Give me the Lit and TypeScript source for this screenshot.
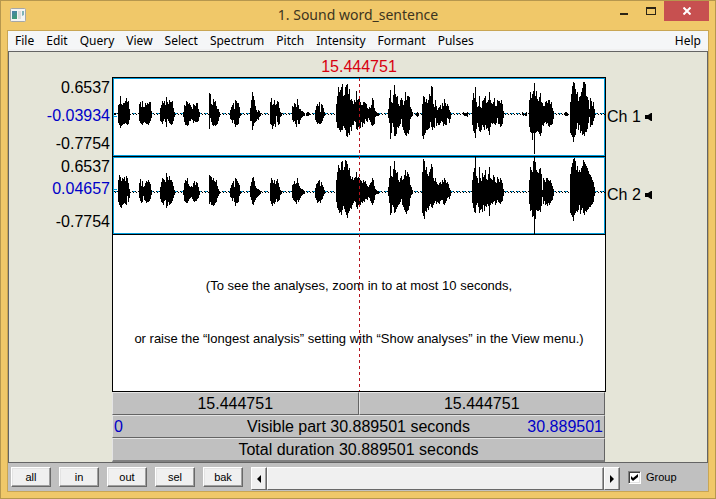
import { LitElement, html, css, svg } from "lit";
import { customElement, property } from "lit/decorators.js";

interface Burst {
  x: number;
  up: string;
  down: string;
}

/* Per-pixel amplitude above and below the zero line; x counts from the left plot edge. */
const channel1: Burst[] = [
  { x: 1, up: "1 1", down: "0 0" },
  { x: 5, up: "9 10 18 10 9 11 11 13 16 12 13 5", down: "8 10 13 11 10 9 9 8 9 10 9 5" },
  { x: 26, up: "10 12 7 13 7 7 11 9 11 10 12 12 3", down: "6 8 9 10 8 7 8 9 9 10 8 6 3" },
  { x: 47, up: "6 9 13 11 13 9 17 12 10 14 12 12 13 6 2", down: "6 7 9 6 4 7 12 4 6 8 9 10 9 6 2" },
  { x: 70, up: "2 9 8 13 12 10 11 9 7 5 10 9 8 11 11 5 2", down: "2 7 10 10 11 10 6 6 4 5 8 6 7 7 7 6 2" },
  { x: 96, up: "21 20 10 9 15 12 13 8 5 5 2", down: "14 3 7 10 11 10 11 10 9 6 2" },
  { x: 117, up: "4 7 9 11 5 14 13 11 11 7 1", down: "4 5 8 5 9 12 10 10 9 3 1" },
  { x: 137, up: "6 14 22 18 14 8 4 2 4 3 1", down: "6 6 15 11 8 7 6 4 5 2 1" },
  { x: 157, up: "12 16 9 10 14 9 10 13 12 6 2 1", down: "9 10 14 11 9 12 1 7 10 9 2 1" },
  { x: 179, up: "8 7 11 10 7 15 9 5 5 3 3 2 1", down: "5 7 6 9 12 5 9 9 5 3 2 1 1" },
  { x: 193, up: "1 2 2 1", down: "1 1 1 0" },
  { x: 202, up: "4 8 10 8 12 2 10 9 6 2", down: "5 7 9 8 9 9 8 6 3 1" },
  {
    x: 223,
    up: "10 18 27 22 24 27 30 18 19 27 29 30 20 25 14 15 13 10 14 12 23 14 15 18 12 9 9 12 12 11 10 6 5 7 6 9 16 14 6 3 2 1 1",
    down: "7 13 13 15 17 15 15 11 13 15 21 22 18 20 12 16 10 10 6 7 14 15 12 14 13 7 12 8 9 4 6 7 3 5 7 10 11 10 9 2 1 1 1",
  },
  {
    x: 275,
    up: "5 16 24 12 11 19 29 20 17 18 10 8 14 16 14 9 13 22 14 18 18 17 7 5 2",
    down: "3 8 24 18 8 12 21 21 19 12 13 11 9 4 12 15 18 20 21 18 19 15 4 2 1",
  },
  { x: 303, up: "1 2 1", down: "1 2 1" },
  {
    x: 309,
    up: "10 18 17 12 15 11 14 20 18 28 27 10 7 14 8 4 6 7 9 5 11 8 15 11 8 10 8 4 2",
    down: "21 24 20 18 15 15 14 13 7 12 15 12 13 3 11 8 10 10 8 6 7 11 9 10 10 3 4 8 4",
  },
  { x: 350, up: "2 1 1 1 2", down: "0 1 1 1 2" },
  {
    x: 359,
    up: "14 21 16 27 12 7 8 18 7 6 13 14 16 18 11 12 14 22 14 11 10 12 16 8 8 14 13 13 11 14 10 3",
    down: "10 16 18 23 14 8 12 16 17 15 10 12 15 10 14 13 16 20 12 8 9 8 9 10 8 3 9 9 12 11 9 3",
  },
  { x: 409, up: "2 1 0 1 2", down: "0 1 0 1 1" },
  {
    x: 416,
    up: "14 22 16 20 23 31 18 23 15 13 17 21 12 11 8 8 12 13 11 14 14 10 12 6 3",
    down: "12 17 18 25 18 39 18 17 16 17 19 21 18 10 11 8 7 9 8 11 12 10 10 9 4",
  },
  { x: 451, up: "1 2 2 1", down: "0 1 1 1" },
  {
    x: 457,
    up: "12 20 28 32 31 25 20 22 13 17 18 22 26 32 32 30 18 17 14 5 16 13 8 12 5",
    down: "18 20 22 27 22 20 14 8 15 10 18 16 20 19 21 17 17 14 8 2 12 10 10 6 3",
  },
];

const channel2: Burst[] = [
  { x: 5, up: "12 17 15 11 14 13 15 11 16 14 9 3", down: "9 12 14 15 12 11 10 11 12 3 9 5" },
  { x: 26, up: "9 13 6 11 5 6 9 11 10 12 10 8 2", down: "5 8 10 9 3 7 8 10 9 9 8 6 2" },
  { x: 47, up: "5 10 14 13 12 10 19 15 12 16 12 12 10 6 2", down: "6 9 10 12 8 7 15 13 9 12 11 10 8 5 2" },
  { x: 70, up: "2 9 12 11 14 8 6 5 6 5 9 11 7 10 9 5 1", down: "2 8 9 10 10 8 6 5 4 6 8 9 8 8 6 5 2" },
  { x: 96, up: "17 16 15 12 14 11 10 12 6 3 1", down: "11 9 12 12 13 12 10 9 5 3 1" },
  { x: 117, up: "4 7 9 11 5 14 13 11 9 7 1", down: "4 5 8 5 9 13 10 10 9 3 1" },
  { x: 137, up: "6 10 14 15 11 6 4 3 3 2 1", down: "4 7 11 12 9 7 5 4 3 2 1" },
  { x: 157, up: "9 14 12 9 12 8 11 13 9 5 2 1", down: "8 11 13 10 11 9 6 9 8 7 2 1" },
  { x: 179, up: "7 8 11 8 9 14 9 6 4 3 3 2 1", down: "5 7 8 9 11 7 9 7 5 3 2 1 1" },
  { x: 202, up: "4 8 9 11 12 6 10 7 5 2", down: "5 7 10 9 8 10 7 6 3 1" },
  {
    x: 223,
    up: "12 20 27 24 22 30 31 22 25 32 31 28 22 24 16 13 15 12 14 15 20 14 15 14 12 11 9 12 10 11 8 6 5 7 9 10 14 12 6 3 2 1 1",
    down: "9 15 17 20 19 22 17 13 16 19 22 25 20 18 15 16 12 10 8 9 14 16 12 13 12 9 10 8 9 6 6 7 4 5 8 10 12 10 7 2 1 1 1",
  },
  {
    x: 275,
    up: "5 14 26 16 15 23 31 22 19 20 12 10 14 16 12 13 17 22 16 20 18 15 7 5 2",
    down: "3 10 22 20 12 14 20 19 16 14 12 11 9 6 12 14 17 19 21 18 17 13 5 2 1",
  },
  {
    x: 309,
    up: "20 33 31 22 25 18 16 20 23 28 25 14 11 14 10 8 7 9 10 8 12 10 14 12 9 10 8 4 2",
    down: "20 23 26 18 19 15 17 13 11 14 15 12 10 8 11 9 10 11 8 7 7 11 12 10 8 5 4 6 3",
  },
  {
    x: 359,
    up: "12 20 24 35 16 14 9 25 14 11 19 15 17 22 13 12 18 25 14 13 12 17 15 10 9 15 13 10 14 12 9 3",
    down: "10 15 19 20 12 10 14 20 17 16 19 12 18 13 14 11 13 23 12 10 11 9 8 12 10 7 9 10 11 9 8 3",
  },
  {
    x: 416,
    up: "12 25 22 20 31 35 30 22 20 19 23 24 18 2 14 12 10 14 14 12 11 12 9 6 3",
    down: "11 18 17 24 23 41 26 17 18 18 17 19 13 4 11 8 12 11 13 10 12 10 8 7 3",
  },
  {
    x: 457,
    up: "18 25 29 33 34 31 22 26 20 22 20 24 26 32 30 28 26 24 21 18 17 15 12 10 5",
    down: "20 22 24 28 22 20 18 19 17 12 21 17 15 20 22 18 19 17 16 14 14 12 11 9 3",
  },
];

@customElement("wave-track")
class WaveTrack extends LitElement {
  @property({ attribute: false }) bursts: Burst[] = [];
  @property({ type: Number }) zero = 36;
  @property({ type: Number }) mean = 38;
  @property({ type: Number }) span = 78;

  static styles = css`
    :host {
      display: block;
    }
    svg {
      display: block;
      width: 100%;
      height: 100%;
    }
    .frame {
      fill: none;
      stroke: #009ede;
    }
    .zero {
      stroke: #009ede;
      stroke-dasharray: 4 2;
    }
    .mean {
      stroke: #009ede;
    }
    .ink {
      fill: #000;
    }
  `;

  private shape() {
    const z = this.zero;
    let d = "";
    for (let x = 1; x < 491; x += 3) {
      d += `M${x} ${z - 1}h1v1h-1zM${x + 1} ${z}h1v1h-1z`;
    }
    for (const burst of this.bursts) {
      const down = burst.down.split(" ").map(Number);
      burst.up.split(" ").map(Number).forEach((u, i) => {
        const top = Math.max(0, z - u);
        const bottom = Math.min(this.span, z + 1 + (down[i] ?? 0));
        d += `M${burst.x + i} ${top}h1V${bottom}h-1z`;
      });
    }
    return d;
  }

  render() {
    return html`<svg viewBox="0 0 492 ${this.span}" preserveAspectRatio="none" shape-rendering="crispEdges" aria-hidden="true">
      ${svg`<rect class="frame" x="0.5" y="0.5" width="491" height=${this.span - 1}></rect>
      <path class="zero" d="M1 ${this.zero - 0.5}H491"></path>
      <path class="mean" d="M0 ${this.mean + 0.5}H4"></path>
      <path class="ink" d=${this.shape()}></path>`}
    </svg>`;
  }
}

@customElement("app-root")
class AppRoot extends LitElement {
  static styles = css`
    :host {
      display: block;
      font-family: "Liberation Sans", Arial, sans-serif;
      color: #000;
    }
    * {
      box-sizing: border-box;
    }
    button {
      font: inherit;
      color: inherit;
      margin: 0;
      padding: 0;
      border: 0;
      background: none;
    }
    svg {
      display: block;
    }
    .window {
      min-height: 100vh;
      display: flex;
      flex-direction: column;
      background: #f0c869;
      border: 1px solid #b6974e;
      padding: 0 6px 6px;
    }
    .title {
      height: 29px;
      display: grid;
      grid-template-columns: 1fr auto 1fr;
      align-items: start;
    }
    .appicon {
      margin: 7px 0 0 3px;
    }
    h1 {
      margin: 0;
      font: 14px/28px "Noto Sans", sans-serif;
      color: #3c3420;
    }
    .controls {
      display: flex;
      justify-content: flex-end;
    }
    .controls button {
      width: 27px;
      height: 20px;
      display: flex;
      align-items: center;
      justify-content: center;
    }
    .controls .close {
      width: 45px;
      background: #c75050;
    }
    .client {
      flex: 1;
      display: flex;
      flex-direction: column;
      border: 1px solid #c9a654;
    }
    .menu {
      display: flex;
      height: 20px;
      background: #f5f6f7;
      border-bottom: 2px solid #f0f0f0;
      padding: 0 7px;
      gap: 12px;
      font: 12px/20px "Noto Sans", sans-serif;
    }
    .menu .help {
      margin-left: auto;
    }
    .canvas {
      flex: 1;
      display: grid;
      grid-template-columns: 103px 1fr 101px;
      grid-template-rows: 25px 79px 77px 1fr auto;
      background: #e5e5d8;
      border: 1px solid #646464;
      font-size: 16px;
      line-height: 18px;
    }
    .time {
      grid-area: 1 / 2;
      text-align: center;
      padding-top: 6px;
      color: #d8000f;
    }
    .axis {
      display: flex;
      flex-direction: column;
      grid-column: 1;
      text-align: right;
      padding: 2px 2px 0 0;
      gap: 10px;
    }
    .axis.second {
      gap: 15px;
    }
    .axis.second .value {
      margin-top: -11px;
    }
    .one {
      grid-row: 2;
    }
    .second {
      grid-row: 3;
    }
    .value,
    .range {
      color: #0000c8;
    }
    .plot {
      grid-area: 2 / 2 / 5 / 3;
      position: relative;
      display: flex;
      flex-direction: column;
      background: #fff;
      border: 1px solid #000;
    }
    .first-track {
      height: 79px;
      border-bottom: 1px solid #000;
    }
    .second-track {
      height: 78px;
      border-bottom: 1px solid #000;
    }
    .message {
      flex: 1;
      display: flex;
      flex-direction: column;
      align-items: center;
      justify-content: center;
      gap: 35px;
      padding-bottom: 2px;
      font-size: 13px;
      white-space: nowrap;
    }
    .message p {
      margin: 0;
    }
    .cursor {
      position: absolute;
      top: 0;
      bottom: 0;
      left: 50%;
      width: 1px;
      background: repeating-linear-gradient(#b4141e 0 3px, transparent 3px 6px);
    }
    .channel {
      grid-column: 3;
      display: flex;
      align-items: center;
      gap: 4px;
      padding-left: 1px;
    }
    .bars {
      grid-area: 5 / 2;
      margin-right: 1px;
    }
    .row {
      display: flex;
    }
    .bar {
      flex: 1;
      display: flex;
      justify-content: center;
      height: 23px;
      line-height: 22px;
      background: #c0c0c0;
      border: 1px solid #e4e4e4;
      border-right-color: #646464;
      border-bottom-color: #646464;
    }
    .visible {
      display: grid;
      grid-template-columns: 1fr auto 1fr;
      padding: 0 1px;
    }
    .range.end {
      text-align: right;
    }
    .total {
      height: 24px;
      border-bottom: 2px solid #808080;
    }
    .tools {
      display: flex;
      height: 28px;
      align-items: flex-start;
      gap: 8px;
      padding: 4px 3px 0;
      background: #c0c0c0;
      font-size: 11px;
    }
    .tools .push {
      width: 40px;
      height: 20px;
      background: #f0f0f0;
      border: 1px solid #fff;
      border-right-color: #696969;
      border-bottom-color: #696969;
      box-shadow: inset -1px -1px #a0a0a0, inset 1px 1px #e3e3e3;
    }
    .scroll {
      flex: 1;
      display: flex;
      height: 23px;
    }
    .scroll .thumb {
      flex: 1;
    }
    .scroll button {
      width: 16px;
      display: flex;
      align-items: center;
      justify-content: center;
      background: #f0f0f0;
      border: 1px solid #fff;
      border-right-color: #696969;
      border-bottom-color: #696969;
      box-shadow: inset -1px 0 #a0a0a0;
    }
    .group {
      display: flex;
      align-items: center;
      gap: 5px;
      height: 20px;
      width: 77px;
    }
    .group input {
      appearance: none;
      margin: 0;
      width: 13px;
      height: 13px;
      background: #fff;
      border: 1px solid #808080;
      border-right-color: #fff;
      border-bottom-color: #fff;
      box-shadow: inset 1px 1px #404040, inset -1px -1px #e3e3e3;
    }
    .group .box {
      position: relative;
      display: flex;
    }
    .group .box svg {
      position: absolute;
      left: 3px;
      top: 3px;
      pointer-events: none;
    }
    .group input:not(:checked) + svg {
      display: none;
    }
  `;

  private menus = ["File", "Edit", "Query", "View", "Select", "Spectrum", "Pitch", "Intensity", "Formant", "Pulses"];
  private zooms = ["all", "in", "out", "sel", "bak"];

  private speaker() {
    return html`<svg width="7" height="8" viewBox="0 0 7 8" aria-hidden="true">
      <path d="M0 2h3L6 0h1v8H6L3 6H0z" />
    </svg>`;
  }

  render() {
    return html`
      <main class="window">
        <header class="title">
          <svg class="appicon" width="16" height="14" viewBox="0 0 16 14" aria-hidden="true">
            <defs>
              <linearGradient id="pane" x1="0" y1="0" x2="0.4" y2="1">
                <stop offset="0" stop-color="#4b7fb0" />
                <stop offset="1" stop-color="#3e9a76" />
              </linearGradient>
            </defs>
            <rect x="0.5" y="0.5" width="15" height="13" rx="1" fill="#f4f4f4" stroke="#a3a7a8" />
            <rect x="2" y="3" width="5" height="8" fill="url(#pane)" />
            <rect x="8" y="3" width="3" height="8" fill="#dcdcdc" />
            <path d="M12 3h2v4l-2 1z" fill="#7fb3b8" />
          </svg>
          <h1>1. Sound word_sentence</h1>
          <div class="controls">
            <button aria-label="Minimize">
              <svg width="8" height="8" viewBox="0 0 8 8"><path d="M0 6h8v2H0z" fill="#2b2415" /></svg>
            </button>
            <button aria-label="Maximize">
              <svg width="10" height="8" viewBox="0 0 10 8"><path fill-rule="evenodd" d="M0 0h10v8H0zM1 2v5h8V2z" fill="#2b2415" /></svg>
            </button>
            <button class="close" aria-label="Close">
              <svg width="8" height="8" viewBox="0 0 8 8"><path d="M0.5 0.5l7 7M7.5 0.5l-7 7" stroke="#fff" stroke-width="2" /></svg>
            </button>
          </div>
        </header>
        <div class="client">
          <nav class="menu">
            ${this.menus.map((name) => html`<button>${name}</button>`)}
            <button class="help">Help</button>
          </nav>
          <section class="canvas">
            <div class="time">15.444751</div>
            <div class="axis one">
              <span>0.6537</span><span class="value">-0.03934</span><span>-0.7754</span>
            </div>
            <div class="axis second">
              <span>0.6537</span><span class="value">0.04657</span><span>-0.7754</span>
            </div>
            <div class="plot">
              <wave-track class="first-track" .bursts=${channel1} .zero=${36} .mean=${38} .span=${78}></wave-track>
              <wave-track class="second-track" .bursts=${channel2} .zero=${35} .mean=${32} .span=${77}></wave-track>
              <div class="message">
                <p>(To see the analyses, zoom in to at most 10 seconds,</p>
                <p>or raise the “longest analysis” setting with “Show analyses” in the View menu.)</p>
              </div>
              <div class="cursor"></div>
            </div>
            <div class="channel one">Ch 1 ${this.speaker()}</div>
            <div class="channel second">Ch 2 ${this.speaker()}</div>
            <div class="bars">
              <div class="row">
                <div class="bar">15.444751</div>
                <div class="bar">15.444751</div>
              </div>
              <div class="bar visible">
                <span class="range">0</span>
                <span>Visible part 30.889501 seconds</span>
                <span class="range end">30.889501</span>
              </div>
              <div class="bar total">Total duration 30.889501 seconds</div>
            </div>
          </section>
          <footer class="tools">
            ${this.zooms.map((name) => html`<button class="push">${name}</button>`)}
            <div class="scroll">
              <button aria-label="Scroll left">
                <svg width="4" height="8" viewBox="0 0 4 8"><path d="M4 0v8L0 4z" /></svg>
              </button>
              <button class="thumb" aria-label="Scroll position"></button>
              <button aria-label="Scroll right">
                <svg width="4" height="8" viewBox="0 0 4 8"><path d="M0 0v8l4-4z" /></svg>
              </button>
            </div>
            <label class="group">
              <span class="box">
                <input type="checkbox" checked />
                <svg width="7" height="7" viewBox="0 0 7 7"><path d="M0 2l2 2 5-4v3L2 7 0 5z" /></svg>
              </span>
              Group
            </label>
          </footer>
        </div>
      </main>
    `;
  }
}
